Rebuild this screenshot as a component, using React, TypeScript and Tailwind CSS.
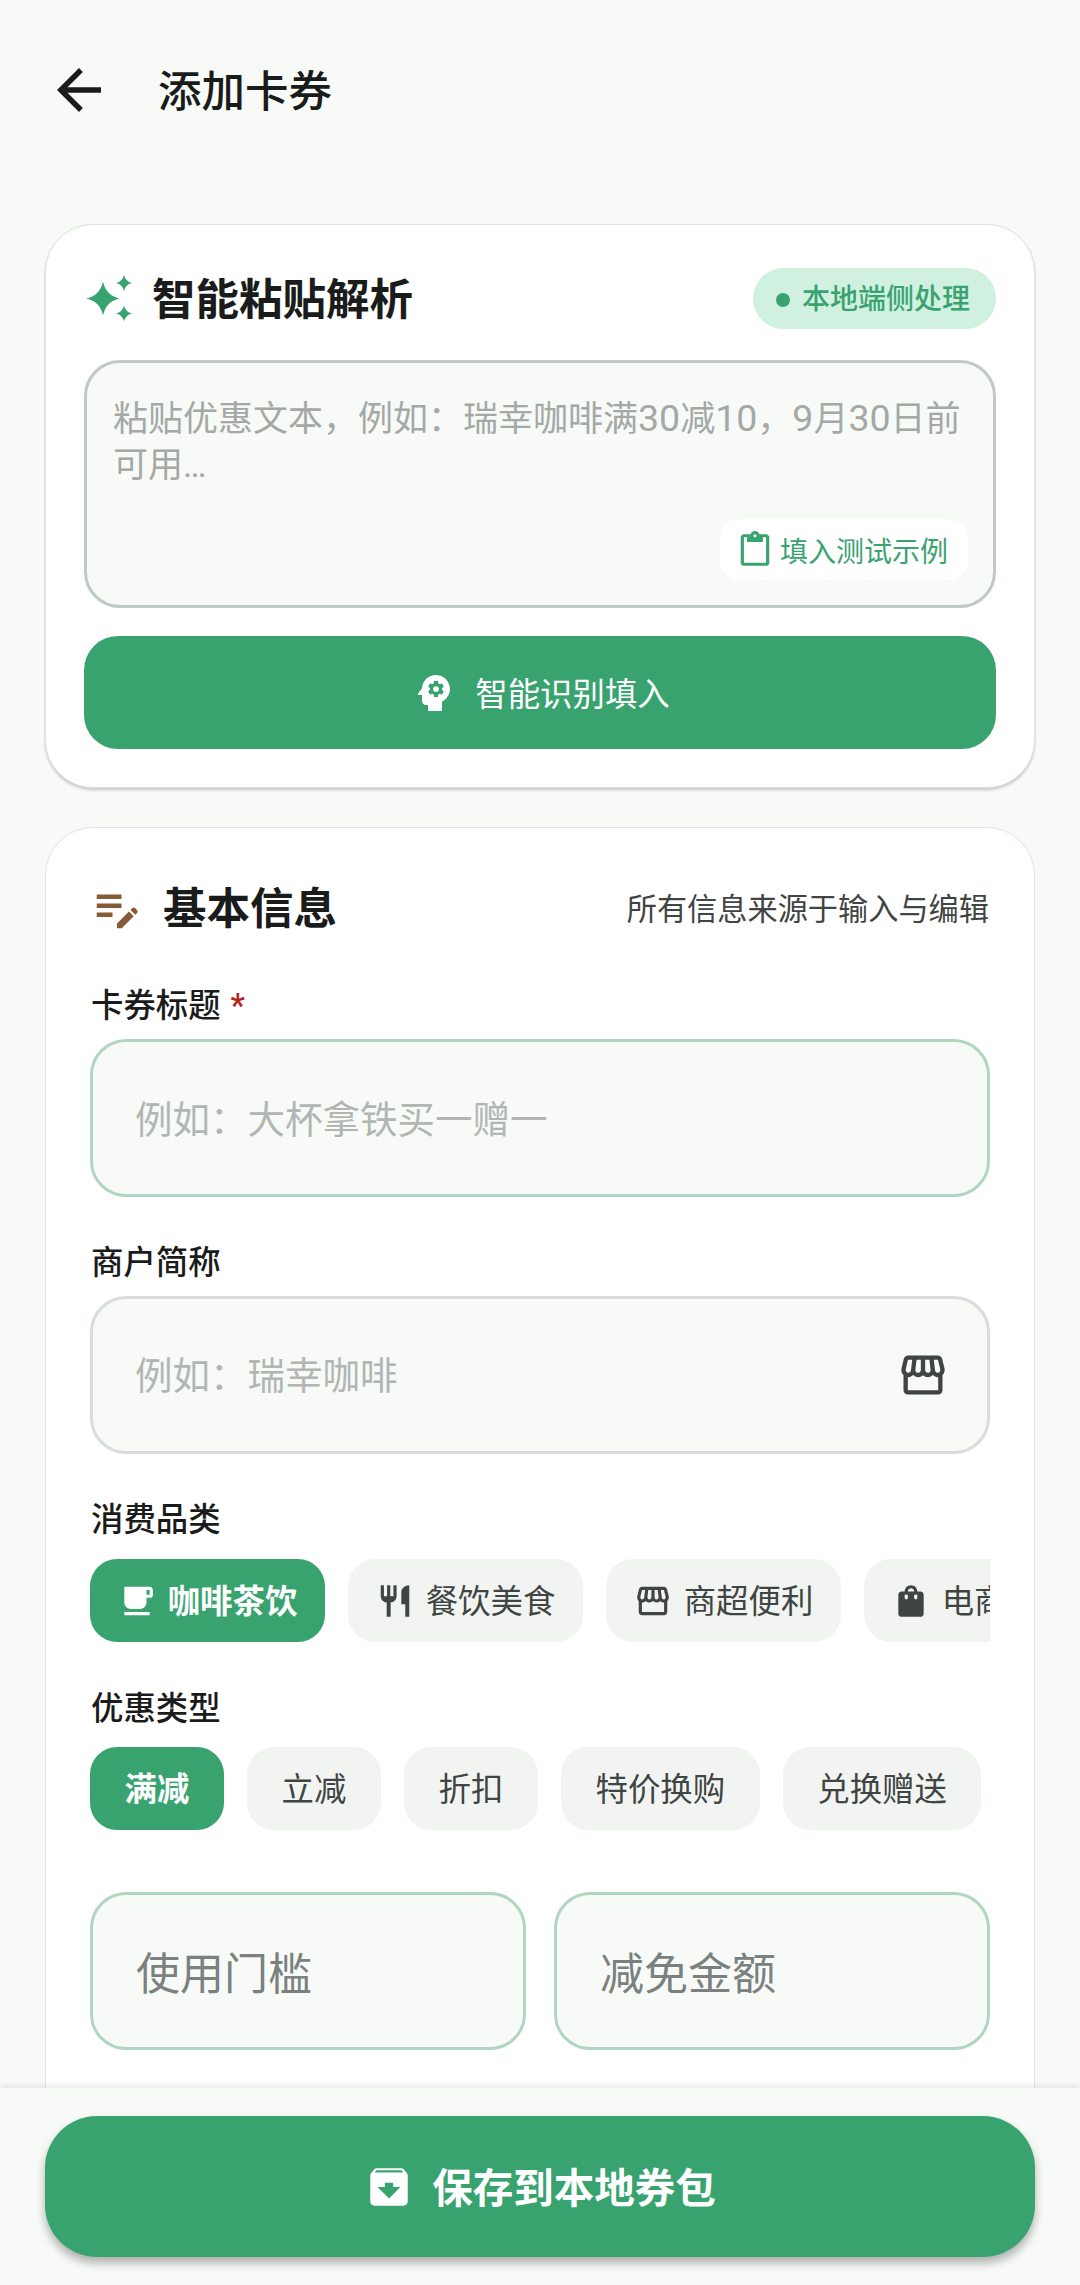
import type { ReactNode } from "react";
import {
  MdArrowBack,
  MdArchive,
  MdEditNote,
  MdLocalCafe,
  MdOutlineContentPaste,
  MdOutlineStorefront,
  MdPsychology,
  MdRestaurant,
  MdShoppingBag,
} from "react-icons/md";

const Sparkles = () => (
  <svg width="48" height="48" viewBox="0 0 48 48" className="shrink-0" fill="#39a370">
    <path d="M17 6.5 Q20 20.5 33.5 23.5 Q20 26.5 17 40.5 Q14 26.5 0.5 23.5 Q14 20.5 17 6.5Z" />
    <path d="M38 0 Q39.5 6.5 46 8 Q39.5 9.5 38 16 Q36.5 9.5 30 8 Q36.5 6.5 38 0Z" />
    <path d="M38 30.5 Q39.5 37 46 38.5 Q39.5 40 38 46.5 Q36.5 40 30 38.5 Q36.5 37 38 30.5Z" />
  </svg>
);

const Label = ({ children, className = "" }: { children: ReactNode; className?: string }) => (
  <div className={`h-[44px] flex items-center pl-[1px] pt-[4px] text-[32.4px] font-medium text-[#1a1c1b] ${className}`}>
    {children}
  </div>
);

const Chip = ({
  icon,
  label,
  active,
  className = "",
}: {
  icon?: ReactNode;
  label: string;
  active?: boolean;
  className?: string;
}) => (
  <div
    className={`h-[83px] shrink-0 flex items-center justify-center gap-[12px] rounded-[27px] text-[32.4px] whitespace-nowrap ${
      active ? "bg-[#39a370] text-white font-bold" : "bg-[#f2f4f2] text-[#3f4542]"
    } ${className}`}
  >
    {icon}
    <span className="pt-[4px]">{label}</span>
  </div>
);

// latin digits sit larger than the cjk around them in the hint text
const Num = ({ children }: { children: ReactNode }) => <span className="text-[37.5px]">{children}</span>;

const categories = [
  { label: "咖啡茶饮", icon: <MdLocalCafe size={38} />, active: true },
  { label: "餐饮美食", icon: <MdRestaurant size={38} /> },
  { label: "商超便利", icon: <MdOutlineStorefront size={38} /> },
  { label: "电商购物", icon: <MdShoppingBag size={38} /> },
];

const dealTypes = ["满减", "立减", "折扣", "特价换购", "兑换赠送"];

const App = () => {
  return (
    <div
      className="w-[1080px] h-[2285px] flex flex-col overflow-hidden bg-[#f8faf7] text-[#1a1c1b]"
      style={{ fontFamily: 'Roboto, "Noto Sans CJK SC", "Noto Sans", sans-serif' }}
    >
      <div className="flex-1 min-h-0 overflow-hidden">
        <header className="h-[180px] flex items-center pl-[46px]">
          <MdArrowBack size={66} className="shrink-0" />
          <h1 className="ml-[46px] pt-[6px] text-[43.5px] leading-none font-medium">添加卡券</h1>
        </header>

        <div className="mx-[45px] mt-[44px] px-[38px] pt-[43px] pb-[38px] bg-white border border-[#dfe2e0] rounded-[48px] shadow-[0_2px_3px_rgba(0,0,0,0.2)]">
          <div className="flex items-center justify-between h-[61px]">
            <div className="flex items-center">
              <div className="ml-[2px]">
                <Sparkles />
              </div>
              <h2 className="ml-[18px] pt-[4px] text-[43.5px] leading-none font-bold">智能粘贴解析</h2>
            </div>
            <div className="h-[61px] w-[243px] flex items-center pl-[23px] pt-[3px] rounded-full bg-[#d0f0e0] text-[#39a370] text-[28px] font-medium">
              <span className="w-[14px] h-[14px] rounded-full bg-[#39a370] mr-[12px]" />
              本地端侧处理
            </div>
          </div>

          <div className="relative mt-[31px] h-[248px] px-[26px] pt-[32px] text-[35px] leading-[46px] text-[#a4a9a6] bg-[#f8faf7] border-[3px] border-[#bfc9c5] rounded-[36px]">
            粘贴优惠文本，例如：瑞幸咖啡满<Num>30</Num>减<Num>10</Num>，<Num>9</Num>月<Num>30</Num>日前
            <br />
            可用…
            <div className="absolute right-[25px] bottom-[25px] w-[248px] h-[61px] flex items-center pl-[16px] gap-[6px] rounded-[20px] bg-white text-[#39a370] text-[28px] leading-normal">
              <MdOutlineContentPaste size={38} className="shrink-0" />
              <span className="pt-[6px]">填入测试示例</span>
            </div>
          </div>

          <button className="mt-[28px] w-full h-[113px] flex items-center justify-center gap-[17px] rounded-[34px] bg-[#39a370] text-white text-[32.4px]">
            <MdPsychology size={48} />
            <span className="pt-[6px]">智能识别填入</span>
          </button>
        </div>

        <div className="mx-[45px] mt-[39px] px-[44px] pt-[50px] h-[1400px] bg-white border border-[#dfe2e0] rounded-[48px]">
          <div className="flex items-center justify-between h-[60px]">
            <div className="flex items-center">
              <MdEditNote size={54} className="shrink-0 text-[#855a35]" />
              <h2 className="ml-[19px] pt-[4px] text-[43.5px] leading-none font-bold">基本信息</h2>
            </div>
            <span className="mr-[1px] pt-[4px] text-[30.2px] text-[#3f4542]">所有信息来源于输入与编辑</span>
          </div>

          <Label className="mt-[44px]">
            卡券标题<span className="ml-[10px] text-[#b3261e]">*</span>
          </Label>
          <input
            readOnly
            placeholder="例如：大杯拿铁买一赠一"
            className="block mt-[13px] w-full h-[158px] px-[42px] pt-[3px] text-[37.5px] outline-none bg-[#f8faf7] border-[3px] border-[#b0d6c2] rounded-[36px] placeholder:text-[#b2b6b3]"
          />

          <Label className="mt-[42px]">商户简称</Label>
          <div className="mt-[13px] h-[158px] flex items-center pl-[42px] pr-[38px] bg-[#f8faf7] border-[3px] border-[#d8dcda] rounded-[36px]">
            <input
              readOnly
              placeholder="例如：瑞幸咖啡"
              className="flex-1 min-w-0 pt-[3px] text-[37.5px] outline-none bg-transparent placeholder:text-[#b2b6b3]"
            />
            <MdOutlineStorefront size={52} className="shrink-0 text-[#3f4542]" />
          </div>

          <Label className="mt-[42px]">消费品类</Label>
          <div className="mt-[19px] flex gap-[23px] overflow-hidden">
            {categories.map((c) => (
              <Chip key={c.label} icon={c.icon} label={c.label} active={c.active} className="w-[235px]" />
            ))}
          </div>

          <Label className="mt-[43px]">优惠类型</Label>
          <div className="mt-[18px] flex gap-[23px] overflow-hidden">
            {dealTypes.map((t, i) => (
              <Chip key={t} label={t} active={i === 0} className="px-[34.6px]" />
            ))}
          </div>

          <div className="mt-[62px] grid grid-cols-2 gap-[28px]">
            {["使用门槛", "减免金额"].map((p) => (
              <input
                key={p}
                readOnly
                placeholder={p}
                className="block w-full min-w-0 h-[158px] px-[43px] pt-[8px] text-[44px] outline-none bg-[#f8faf7] border-[3px] border-[#b0d6c2] rounded-[36px] placeholder:text-[#7b817e]"
              />
            ))}
          </div>
        </div>
      </div>

      <div className="relative h-[197px] shrink-0 px-[45px] pt-[28px] bg-[#f8faf7] shadow-[0_-2px_6px_rgba(0,0,0,0.1)]">
        <button className="w-full h-[141px] flex items-center justify-center gap-[18px] rounded-[52px] bg-[#39a370] text-white text-[40.5px] font-bold shadow-[0_6px_10px_rgba(0,0,0,0.3)]">
          <MdArchive size={50} />
          <span className="pt-[6px]">保存到本地券包</span>
        </button>
      </div>
    </div>
  );
};

export default App;
